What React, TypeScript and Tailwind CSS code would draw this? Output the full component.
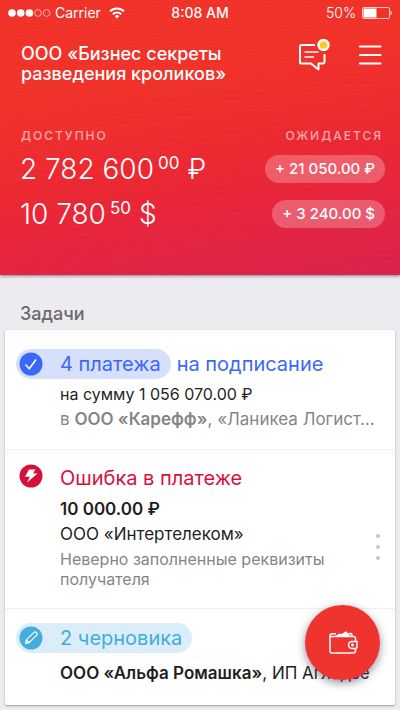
import type { ReactNode } from "react";

interface Balance {
  whole: string;
  cents: string;
  currency: string;
  expected: string;
}

const balances: Balance[] = [
  { whole: "2 782 600", cents: "00", currency: "₽", expected: "+ 21 050.00 ₽" },
  { whole: "10 780", cents: "50", currency: "$", expected: "+ 3 240.00 $" },
];

function StatusBar() {
  return (
    <div className="grid grid-cols-[1fr_auto_1fr] items-center h-[25px] px-2 text-sm leading-5">
      <div className="flex items-center">
        <svg className="w-[43px] h-2" viewBox="0 0 43 8">
          <g fill="#fff">
            <circle cx="4" cy="4" r="3.8" />
            <circle cx="12.7" cy="4" r="3.8" />
            <circle cx="21.4" cy="4" r="3.8" />
          </g>
          <g fill="none" stroke="#fff" strokeWidth="0.8" opacity="0.75">
            <circle cx="30" cy="4" r="3.4" />
            <circle cx="38.6" cy="4" r="3.4" />
          </g>
        </svg>
        <span className="ml-1">Carrier</span>
        <svg className="w-4 h-3 ml-2" viewBox="0 0 16 12" fill="none" stroke="#fff" strokeWidth="2">
          <path d="M1 4.3a10 10 0 0 1 14 0" />
          <path d="M3.8 7.2a6 6 0 0 1 8.4 0" />
          <path d="M5.7 9.2a3.3 3.3 0 0 1 4.6 0L8 11.6z" fill="#fff" stroke="none" />
        </svg>
      </div>
      <span className="font-medium">8:08 AM</span>
      <div className="flex items-center justify-end">
        <span className="font-light">50%</span>
        <svg className="w-8 h-3 ml-1" viewBox="0 0 32 12">
          <rect x="2.5" y="0.5" width="27" height="11" rx="1.5" fill="none" stroke="#fff" strokeOpacity="0.75" />
          <rect x="3.5" y="1.5" width="13" height="9" fill="#fff" />
          <path d="M30.500 3.800c1.500.5 1.500 3.900 0 4.400z" fill="#fff" />
        </svg>
      </div>
    </div>
  );
}

function Header() {
  return (
    <header className="relative h-[275px] overflow-hidden text-white bg-linear-170 from-[#f2332a] from-30% via-[#ec2833] via-60% to-[#dc224e] shadow-[0_1px_3px_rgba(60,50,70,0.6)]">
      {/* Wavy texture */}
      <svg className="absolute inset-0 w-full h-full" aria-hidden="true">
        <defs>
          <pattern id="waves" width="48" height="7" patternUnits="userSpaceOnUse" patternTransform="rotate(-3)">
            <path d="M0 3.5Q12 0 24 3.5T48 3.5" fill="none" stroke="#c3142c" strokeOpacity="0.16" />
          </pattern>
        </defs>
        <rect width="100%" height="100%" fill="url(#waves)" />
      </svg>

      <div className="relative">
        <StatusBar />

        <div className="flex items-start pl-[21px] pr-[18px] pt-[19px]">
          <h1 className="flex-1 text-lg leading-5 font-medium whitespace-nowrap">
            ООО «Бизнес секреты
            <br />
            разведения кроликов»
          </h1>
          <button type="button" aria-label="Сообщения" className="-mt-2">
            <svg className="w-8 h-9" viewBox="0 0 32 36" fill="none" stroke="#fff" strokeWidth="2">
              <path
                d="M17 9H3.500a1.500 1.500 0 0 0-1.500 1.500V26a1.500 1.500 0 0 0 1.500 1.500H13l7.500 6v-6H25a1.500 1.500 0 0 0 1.500-1.500V18"
                strokeLinejoin="round"
              />
              <path d="M6.500 16h14M6.500 21h9.500" strokeWidth="1.500" />
              <circle cx="25.500" cy="9" r="5" fill="#ffc91f" strokeWidth="2.400" />
            </svg>
          </button>
          <button type="button" aria-label="Меню" className="ml-7">
            <svg className="w-6 h-[22px]" viewBox="0 0 24 22" stroke="#fff" strokeWidth="2.200" strokeLinecap="round">
              <path d="M2 2.500h20.500M2 11h20.500M2 19.500h20.500" />
            </svg>
          </button>
        </div>

        <div className="flex justify-between mt-[42px] pl-[21px] pr-[17px] text-xs leading-5 font-medium tracking-[2px] text-white/60">
          <h2>ДОСТУПНО</h2>
          <h2>ОЖИДАЕТСЯ</h2>
        </div>

        <ul>
          {balances.map((b) => (
            <li key={b.currency} className="flex items-center justify-between h-[45px] pl-5 pr-[15px]">
              <span className="flex items-start text-[28px] leading-8 font-light whitespace-nowrap">
                {b.whole}
                <span className="ml-1 text-[17px] leading-5 font-normal">{b.cents}</span>
                <span className="ml-2">{b.currency}</span>
              </span>
              <span className="rounded-full bg-white/25 px-[10px] text-[15px] leading-7 font-medium whitespace-nowrap">
                {b.expected}
              </span>
            </li>
          ))}
        </ul>
      </div>
    </header>
  );
}

interface TaskProps {
  icon: ReactNode;
  title: string;
  rest?: string;
  color: string;
  pill?: string;
  className: string;
  children: ReactNode;
}

function Task({ icon, title, rest, color, pill = "", className, children }: TaskProps) {
  return (
    <li className={`pl-[11px] ${className}`}>
      <h3 className={`flex items-center text-xl leading-[30px] whitespace-nowrap ${color}`}>
        <span className={`flex items-center rounded-full pl-[3px] pr-[10px] ${pill}`}>
          {icon}
          <span className="ml-[17px]">{title}</span>
        </span>
        {rest && <span className="ml-[6px]">{rest}</span>}
      </h3>
      <div className="pl-11 text-[17px] leading-[25px] text-[#1f1f1f]">{children}</div>
    </li>
  );
}

export default function App() {
  return (
    <div className="relative min-h-screen pb-[5px] bg-[#edebf0] font-[Inter,'Noto_Sans',sans-serif]">
      <Header />

      <main className="px-[5px]">
        <h2 className="pl-[15px] pt-[26px] pb-1 text-lg leading-[25px] font-medium text-[#6b696c]">Задачи</h2>

        <ul className="rounded-xs bg-white shadow-[0_1px_2px_rgba(80,70,90,0.5)]">
          <Task
            title="4 платежа"
            rest="на подписание"
            color="text-[#3b68f5]"
            pill="bg-[#d6dffc]"
            className="pt-[19px] pb-[17px] border-b border-[#f0f0f0]"
            icon={
              <svg className="w-6 h-6" viewBox="0 0 24 24" fill="none">
                <circle cx="12" cy="12" r="11.500" fill="#3b68f8" />
                <path d="M6.500 12.500l3.800 4.300L17 7.500" stroke="#fff" strokeWidth="1.500" />
              </svg>
            }
          >
            <p className="mt-[3px] text-base leading-[25px]">на сумму 1 056 070.00 ₽</p>
            <p className="whitespace-nowrap text-[#858585]">
              в <b className="font-semibold">ООО «Карефф»</b>, «Ланикеа Логист…
            </p>
          </Task>

          <Task
            title="Ошибка в платеже"
            color="text-[#d9103c]"
            className="relative pt-[13px] pb-[19px] border-b border-[#f0f0f0]"
            icon={
              <svg className="w-6 h-6 -mt-1" viewBox="0 0 24 24">
                <circle cx="12" cy="12" r="11.500" fill="#d4103c" />
                <path d="M10 5.500h6.500L14 9.500h4.500L8 18.500l2.800-5.800H6z" fill="#fff" />
              </svg>
            }
          >
            <p className="mt-1 font-semibold">10 000.00 ₽</p>
            <p>ООО «Интертелеком»</p>
            <p className="mt-[2px] text-base leading-5 text-[#858585]">
              Неверно заполненные реквизиты
              <br />
              получателя
            </p>
            <button type="button" aria-label="Действия" className="absolute right-[14px] top-[83px]">
              <svg className="w-[6px] h-7" viewBox="0 0 6 28" fill="#c6c4c8">
                <circle cx="3" cy="3" r="2" />
                <circle cx="3" cy="14" r="2" />
                <circle cx="3" cy="25" r="2" />
              </svg>
            </button>
          </Task>

          <Task
            title="2 черновика"
            color="text-[#41aedb]"
            pill="bg-[#daedf9]"
            className="pt-[14px] pb-[19px]"
            icon={
              <svg className="w-6 h-6" viewBox="0 0 24 24" fill="none">
                <circle cx="12" cy="12" r="11.500" fill="#41aedb" />
                <path
                  d="M6.500 17.500l.8-3.600 7.600-7.600a1.500 1.500 0 0 1 2.100 0l.7.7a1.500 1.500 0 0 1 0 2.100l-7.600 7.600zM7.500 14l2.500 2.500"
                  stroke="#fff"
                  strokeWidth="1.200"
                  strokeLinejoin="round"
                />
              </svg>
            }
          >
            <p className="mt-2 whitespace-nowrap">
              <b className="font-semibold">ООО «Альфа Ромашка»</b>, ИП Агладзе
            </p>
          </Task>
        </ul>
      </main>

      <button
        type="button"
        aria-label="Новый платёж"
        className="absolute right-5 bottom-[30px] flex items-center justify-center w-[75px] h-[75px] rounded-full bg-[#ef332e] shadow-[0_3px_10px_rgba(60,50,80,0.55)]"
      >
        <svg className="w-[30px] h-6 ml-[2px]" viewBox="0 0 30 24" fill="none" stroke="#fff" strokeWidth="1.500">
          <path d="M7 2.700H3a2 2 0 0 0-2 2V20a2 2 0 0 0 2 2h21a2.500 2.500 0 0 0 2.500-2.500V18M26.500 10V7.500a2 2 0 0 0-2-2H3.500A2 2 0 0 1 1 4.300M20 2.500h1.500A1.500 1.500 0 0 1 23 4v1.500" />
          <path d="M6 5.500l4-3 2.500.5L17 .3l3.500 3.200 1.500 2z" fill="#fff" stroke="none" />
          <path d="M28 10.500h-5a3.500 3.500 0 0 0 0 7h4l1-1.200z" strokeLinejoin="round" />
          <circle cx="23.500" cy="14" r="1.400" fill="#fff" stroke="none" />
        </svg>
      </button>
    </div>
  );
}
